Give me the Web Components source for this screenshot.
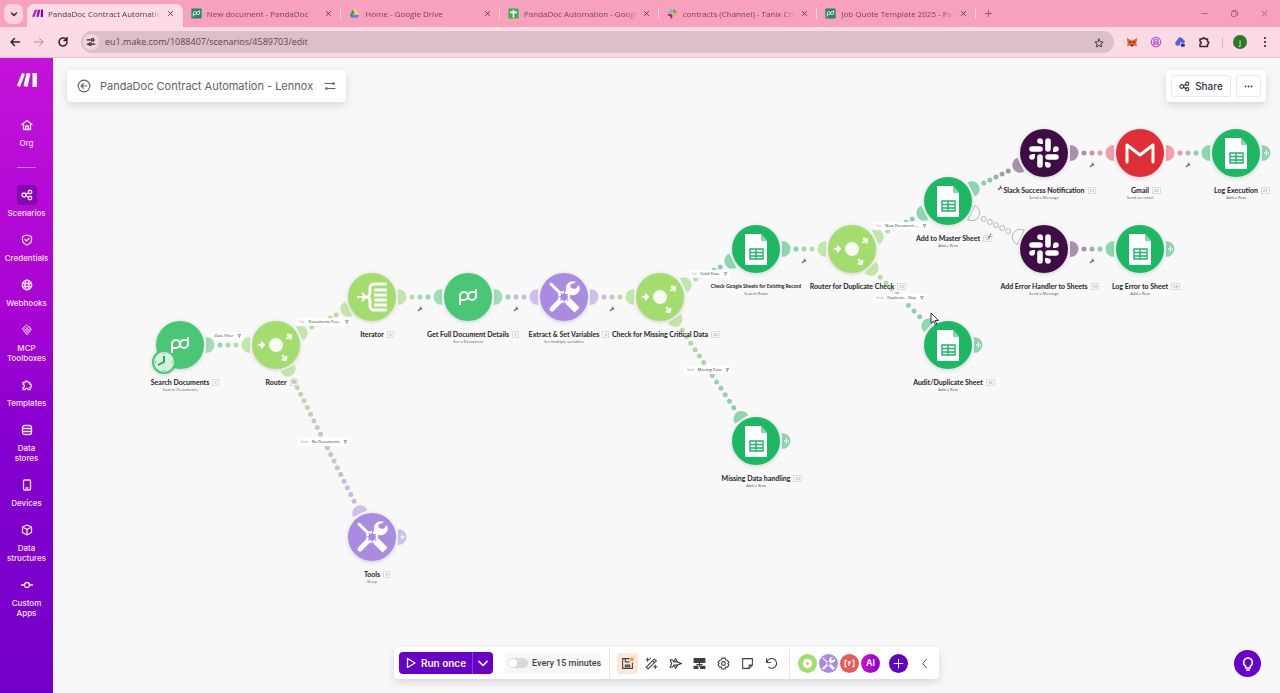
<!DOCTYPE html>
<html lang="en">
<head>
<meta charset="utf-8">
<title>PandaDoc Contract Automation - Lennox | Make</title>
<style>
html,body{margin:0;height:100%}
body{font-family:Inter,"Liberation Sans",sans-serif;color:#3c3f45;overflow:hidden}
</style>
</head>
<body>
<make-app></make-app>
<script>
const define = (name, html, setup) => {
  const tpl = document.createElement('template');
  tpl.innerHTML = '<style>*{box-sizing:border-box}button{font:inherit;color:inherit;border:0;background:none;padding:0;margin:0}svg{display:block}</style>' + html;
  customElements.define(name, class extends HTMLElement {
    constructor() {
      super();
      this.attachShadow({mode: 'open'}).append(tpl.content.cloneNode(true));
    }
    connectedCallback() { if (setup) setup.call(this, this.shadowRoot); }
  });
};

/* ---------- icons ---------- */
const ICONS = {
  down: '<path d="M7 10l5 5 5-5"/>',
  close: '<path d="M5 5l14 14M19 5L5 19"/>',
  plus: '<path d="M12 4v16M4 12h16"/>',
  min: '<path d="M4 12h16"/>',
  restore: '<rect x="4" y="7" width="12" height="13" rx="2"/><path d="M8 4h9a3 3 0 0 1 3 3v10"/>',
  back: '<path d="M21 12H4M11 5l-7 7 7 7"/>',
  fwd: '<path d="M3 12h17M13 5l7 7-7 7"/>',
  reload: '<path d="M20 12a8 8 0 1 1-2.5-5.8M20 3v6h-6"/>',
  tune: '<path d="M3 7h7M3 17h3M14 17h7"/><circle cx="16" cy="7" r="3"/><circle cx="10" cy="17" r="3"/>',
  sliders: '<path d="M2 7h17M5 17h17"/><circle cx="19" cy="7" r="2"/><circle cx="5" cy="17" r="2"/>',
  star: '<path d="M12 2.500l2.900 6.500 7.100.7-5.400 4.700 1.600 7L12 17.700l-6.200 3.700 1.600-7L2 9.700 9.100 9z"/>',
  puzzle: '<path d="M4 6h5a2.500 2.500 0 0 1 5 0h5v5a2.500 2.500 0 0 1 0 5v5H4v-5a2.500 2.500 0 0 0 0-5z"/>',
  piece: '<path d="M4 7h4a3 3 0 1 1 6 0h4v4a3 3 0 1 1 0 6v4h-4a2.500 2.500 0 1 0-5 0H4v-4a3 3 0 1 0 0-6z"/>',
  dots: '<g fill="currentColor" stroke="none"><circle cx="12" cy="4" r="2.200"/><circle cx="12" cy="12" r="2.200"/><circle cx="12" cy="20" r="2.200"/></g>',
  more: '<g fill="currentColor" stroke="none"><circle cx="4" cy="12" r="2.400"/><circle cx="12" cy="12" r="2.400"/><circle cx="20" cy="12" r="2.400"/></g>',
  share: '<circle cx="6" cy="12" r="4"/><circle cx="18" cy="6" r="3.500"/><circle cx="18" cy="18" r="3.500"/><path d="M10 10.500l5-3M10 13.500l5 3"/>',
  backc: '<circle cx="12" cy="12" r="10"/><path d="M17 12H7M11 8l-4 4 4 4"/>',
  home: '<path d="M2 11l10-8 10 8M5 9v12h14V9M9.500 21v-7h5v7"/>',
  shield: '<path d="M12 2l9 3v7c0 5-4 8-9 10-5-2-9-5-9-10V5z"/><path d="M8 11l3 3 5-5"/>',
  globe: '<circle cx="12" cy="12" r="9.500"/><ellipse cx="12" cy="12" rx="4" ry="9.500"/><path d="M3 9h18M3 15h18"/>',
  mcp: '<g stroke-width="1.700"><path d="M12 2l9 8-9 12L3 10z"/><path d="M8.500 5.500l9 9M5.500 8.500l9 9M15.500 5.500l-9 9M18.500 8.500l-9 9"/></g>',
  data: '<rect x="3" y="3" width="18" height="18" rx="4"/><path d="M3 9h18M3 15h18"/>',
  device: '<rect x="5" y="2" width="14" height="20" rx="2"/><path d="M10 18h4"/>',
  cube: '<path d="M12 2l9 4v11l-9 5-9-5V6zM3 6l9 5 9-5M12 11v11"/>',
  commit: '<circle cx="12" cy="12" r="5"/><path d="M0 12h7M17 12h7"/>',
  play: '<path d="M5 3l15 9-15 9z"/>',
  save: '<path d="M15 3H3v18h18V11M8 3v6h7M8 15h8v3H8z"/><circle cx="20" cy="4" r="3.500" fill="#f09a3e" stroke="none"/>',
  wand: '<path d="M2 19L17 4l4 3L6 22zM14 7l3 3M5 2v6M2 5h6M19 15v6M16 18h6M10 2v1"/>',
  plane: '<path d="M2 5h4l3 4h6l8 3-8 3H9l-3 4H2l3-7zM9 9l3-6 4 6M9 15l3 6 4-6"/>',
  align: '<path d="M2 3h20v7H2z" fill="currentColor"/><path d="M12 10v7M7 14h10"/><path d="M2 17h7v4H2zM14 17h8v4h-8z" fill="currentColor"/>',
  gear: '<path d="M9 2h6l1 3 3 1 3 4-2 2 2 3-3 4-3-.5-1 3.500H9l-1-3.500-3 .5-3-4 2-3-2-2 3-4 3-1z"/><circle cx="12" cy="12" r="3.500"/>',
  note: '<path d="M3 3h18v12l-6 6H3zM21 15h-6v6"/>',
  undo: '<path d="M3 3v7h7M3.500 10A9 9 0 1 1 7 19"/>',
  left: '<path d="M16 3l-8 9 8 9"/>',
  bulb: '<path d="M12 3a6.500 6.500 0 0 0-3.500 12v3h7v-3A6.500 6.500 0 0 0 12 3zM10 21h4"/>'
};
define('ui-icon', `<style>:host{display:inline-block;flex:none;width:12px;height:12px}
svg{width:100%;height:100%;fill:none;stroke:currentColor;stroke-linecap:round;stroke-linejoin:round}</style><svg viewBox="0 0 24 24" aria-hidden="true"></svg>`,
function (r) {
  const s = r.querySelector('svg');
  s.innerHTML = ICONS[this.getAttribute('name')];
  s.style.strokeWidth = this.getAttribute('weight') || '2';
});

/* ---------- brand marks ---------- */
const PD = '<g fill="none" stroke="#fff" stroke-width="2"><path d="M-8 8V-1a4 4 0 0 1 8 0 4 4 0 0 0 8 0V-8"/><path d="M-8 3h4a4 4 0 0 0 4-4 4 4 0 0 1 4-4h4"/></g>';
const MARKS = {
  make: '<path fill="url(#mk)" d="M-6-10l5 1-7 18-6-1zM1-10l6 1-4 18-6-1zM9-10h5V9H8z"/><defs><linearGradient id="mk"><stop stop-color="#d21bd3"/><stop offset="1" stop-color="#6d00cc"/></linearGradient></defs>',
  pd: '<rect x="-13" y="-13" width="26" height="26" rx="2" fill="#248567"/>' + PD,
  drive: '<path fill="#1fa463" d="M-4-10L-12 4l4 7L0-3z"/><path fill="#ffd04b" d="M-4-10h8L12 4H4z"/><path fill="#4688f4" d="M-4 4h16l-4 7H-8z"/>',
  sheets: '<rect x="-13" y="-13" width="26" height="26" rx="3" fill="#3eae4f"/><path d="M-9-3H9M0-9V10" stroke="#fff" stroke-width="4.500"/>',
  slack: '<g stroke-width="5" stroke-linecap="round"><path stroke="#5ac0e0" d="M-3-9v5M-9-3h5"/><path stroke="#4bb07f" d="M4-9v6M9-3h-1"/><path stroke="#e8b23c" d="M4 4h5"/><path stroke="#c21d55" d="M-3 4v6M-9 4h2"/></g>',
  fox: '<path fill="#e2622b" d="M-12-10L-3-4h6l9-6-2 14 2 6-7-2-2 2h-6l-2-2-7 2 2-6z"/><path fill="#3a2320" d="M-9-1h6l1 4zM9-1H3L2 3zM-3 7h6l-1 3h-4z"/>',
  ext: '<g fill="none" stroke="#b04bd0" stroke-width="2.400"><circle r="11"/><path d="M-5 7V-3a5 4 0 0 1 10 0V7M-2-3v10M2-3v10"/></g>',
  drop: '<path fill="#5062e0" d="M-12 3L-2-11l6 1 8 9-4 5-6-4-3 8-7 1z"/><path fill="#26357d" d="M2 4h9v7H2z"/>'
};
define('brand-mark', `<style>:host{display:inline-block;flex:none;width:10px;height:10px}svg{width:100%;height:100%}</style><svg viewBox="-14 -14 28 28" aria-hidden="true"></svg>`,
function (r) { r.querySelector('svg').innerHTML = MARKS[this.getAttribute('name')] || ''; });

/* ---------- browser frame ---------- */
define('browser-tab', `<style>
:host{display:flex;align-items:flex-start;min-width:0;height:23px;margin-top:4px;padding:0 7px 0 8px;position:relative;color:#7a4256}
:host([active]){background:#fcdbe5;color:#4d3640;border-radius:7px 7px 0 0;margin-left:3px;padding-left:5px}
:host(:not([active]))::after{content:"";position:absolute;right:0;top:4px;width:1px;height:11px;background:#fcd3df}
.tab{flex:1;min-width:0;display:flex;align-items:center;gap:5px;text-align:left;height:19px}
.t{flex:1;overflow:hidden;white-space:nowrap;font-size:8px;line-height:12px;-webkit-mask-image:linear-gradient(90deg,#000 90%,transparent)}
brand-mark{width:11px;height:11px}
.x{padding:6px 2px;margin-left:4px;color:#4d2f3a}ui-icon{width:7px;height:7px;display:block}
</style><button class="tab" role="tab"><brand-mark></brand-mark><span class="t"><slot></slot></span></button><button class="x" aria-label="Close tab"><ui-icon name="close" weight="3"></ui-icon></button>`,
function (r) { const m = document.createElement('brand-mark'); m.setAttribute('name', this.getAttribute('mark')); r.querySelector('brand-mark').replaceWith(m); });

define('browser-frame', `<style>
:host{display:block;font-family:"Open Sans","Noto Sans",sans-serif}
.strip{display:flex;height:27px;background:#f7a1bc;align-items:flex-start}
.search{width:19px;height:20px;margin:4px 1px 0 4px;border-radius:7px;background:#fbd3df;display:grid;place-items:center;color:#3d2730}
.tabs{display:grid;grid-template-columns:repeat(6,1fr);flex:0 1 952px;min-width:0}
.new{width:24px;height:27px;display:grid;place-items:center;color:#7a4256}
.win{margin-left:auto;display:flex;gap:21px;padding:9px 11px 0 0;color:#96566b}
.win ui-icon,.new ui-icon{width:9px;height:9px;display:block}
.bar{height:31px;background:#fcdae4;border-bottom:1px solid #eabfcd;display:flex;align-items:center;color:#33232b;padding:0 9px}
.nav{display:flex;gap:12px;width:72px}
.addr{flex:1;height:22px;border-radius:11px;background:#dcbfc9;display:flex;align-items:center;gap:6px;padding:0 10px 0 2px}
.site{width:16px;height:16px;border-radius:8px;background:#f0d5de;display:grid;place-items:center}
.addr ui-icon{width:10px;height:10px}
input{flex:1;min-width:0;border:0;background:none;font:9px/14px "Open Sans","Noto Sans",sans-serif;color:#62434f;padding:0;outline:0}
.ext{display:flex;align-items:center;margin-left:12px;gap:12px}
.ext ui-icon,.ext brand-mark{width:12px;height:12px;display:block}
.ext i{width:1px;height:11px;background:#f3a3bb}
.me{width:14px;height:14px;border-radius:7px;background:#2d7a26;color:#fff;font-size:8px;line-height:14px;text-align:center;margin-left:-2px}
</style>
<div class="strip"><button class="search" aria-label="Search tabs"><ui-icon name="down" weight="3"></ui-icon></button>
<div class="tabs" role="tablist">
<browser-tab active mark="make">PandaDoc Contract Automation</browser-tab>
<browser-tab mark="pd">New document - PandaDoc</browser-tab>
<browser-tab mark="drive">Home - Google Drive</browser-tab>
<browser-tab mark="sheets">PandaDoc Automation - Google</browser-tab>
<browser-tab mark="slack">contracts (Channel) - Tanix Com</browser-tab>
<browser-tab mark="pd">Job Quote Template 2025 - Pan</browser-tab>
</div><button class="new" aria-label="New tab"><ui-icon name="plus"></ui-icon></button>
<div class="win"><button aria-label="Minimize"><ui-icon name="min"></ui-icon></button><button aria-label="Restore"><ui-icon name="restore"></ui-icon></button><button aria-label="Close"><ui-icon name="close"></ui-icon></button></div></div>
<div class="bar"><div class="nav"><button aria-label="Back"><ui-icon name="back" weight="3"></ui-icon></button><button aria-label="Forward" style="color:#b28796"><ui-icon name="fwd"></ui-icon></button><button aria-label="Reload"><ui-icon name="reload" weight="3"></ui-icon></button></div>
<div class="addr"><span class="site"><ui-icon name="tune" weight="3"></ui-icon></span><input aria-label="Address" value="eu1.make.com/1088407/scenarios/4589703/edit"><button aria-label="Bookmark"><ui-icon name="star"></ui-icon></button></div>
<div class="ext"><brand-mark name="fox"></brand-mark><brand-mark name="ext"></brand-mark><brand-mark name="drop"></brand-mark><ui-icon name="puzzle" weight="3"></ui-icon><i></i><button class="me">j</button><button aria-label="Menu"><ui-icon name="dots"></ui-icon></button></div></div>`);

/* ---------- left navigation ---------- */
define('nav-item', `<style>
:host{display:block}
a{display:flex;flex-direction:column;align-items:center;color:#fbe3ff;text-decoration:none;font-size:8px;line-height:10px;font-weight:500;text-align:center}
.i{width:20px;height:20px;display:grid;place-items:center;border-radius:4px;margin-bottom:3px}
:host([active]) .i{background:#8309b3}
.i ui-icon{width:12px;height:12px}
</style><a href="#"><span class="i"></span><span class="t"><slot></slot></span></a>`,
function (r) { r.querySelector('.i').innerHTML = `<ui-icon name="${this.getAttribute('icon')}" weight="2.600"></ui-icon>`; });
define('side-nav', `<style>
:host{display:flex;flex-direction:column;align-items:stretch;flex:none;width:53px;background:linear-gradient(#c412d9,#a704d3 40%,#8500cf 60%,#7300c8)}
.logo{display:block;margin:15px auto 28px;width:20px}
hr{width:19px;border:0;border-top:1px solid #d66be8;margin:19px auto 17px}
nav{display:flex;flex-direction:column;gap:12px}
</style><a class="logo" href="#" aria-label="Make"><svg width="20" height="14" viewBox="0 0 20 14"><path fill="#fff" d="M5 0l3 1-5 13-3-1.500zM9.500 0l4 .5-3 13.500-4-1zM15.500 0H20v14h-4.500z"/></svg></a>
<nav-item icon="home">Org</nav-item><hr>
<nav><nav-item active icon="share">Scenarios</nav-item><nav-item icon="shield">Credentials</nav-item><nav-item icon="globe">Webhooks</nav-item><nav-item icon="mcp">MCP<br>Toolboxes</nav-item><nav-item icon="piece">Templates</nav-item><nav-item icon="data">Data<br>stores</nav-item><nav-item icon="device">Devices</nav-item><nav-item icon="cube">Data<br>structures</nav-item><nav-item icon="commit">Custom<br>Apps</nav-item></nav>`);

/* ---------- scenario modules ---------- */
const TOOLS = '<g stroke="#fff" fill="#fff"><path d="M-13-13l9 9" stroke-width="3" stroke-linecap="round"/><path d="M4 4l9 9" stroke-width="7"/><path d="M-12 12L6-6" stroke-width="5" stroke-linecap="round"/><path stroke="none" d="M12-15a7 7 0 1 0 3 3l-4 4-4-1-1-3z"/></g>';
const ARROW = 'd="M-18 0h6M-15-3l3 3-3 3"';
const APPS = {
  pd: {c: '#49c775', p: '#9fdcb8', s: PD},
  router: {c: '#a3dd6e', p: '#c3e6ab', s: `<circle r="7" fill="#f7fbf3"/><g fill="none" stroke="#fff" stroke-width="2"><path ${ARROW}/><path ${ARROW} transform="rotate(-32) translate(30 0)"/><path ${ARROW} transform="rotate(57) translate(30 0)"/></g>`},
  iterator: {c: '#a3dd6e', p: '#c3e6ab', s: '<g fill="none" stroke="#fff"><path stroke-width="3" d="M15-13H2a4 4 0 0 0-4 4v5q0 4-4 4 4 0 4 4v5a4 4 0 0 0 4 4h13"/><path stroke-width="3" d="M2-7h13M2-2h13M2 3h13M2 8h13"/><path stroke-width="2" d="M-15 0h8M-10-4l4 4-4 4"/></g>'},
  tools: {c: '#a98be2', p: '#cfc0ea', s: TOOLS + '<circle r="5" fill="#a98be2" stroke="#fff" stroke-width="2.400" stroke-dasharray="3 1"/>'},
  sheets: {c: '#1db863', p: '#8dd6ae', s: '<path fill="#fff" d="M-10-15H5l6 7v23a1 1 0 0 1-1 1h-20a1 1 0 0 1-1-1v-29a1 1 0 0 1 1-1z"/><path fill="#8bd6ab" d="M5-15l6 7H5z"/><g fill="none" stroke="#1db863" stroke-width="1.400"><path d="M-6 0H7V10H-6zM-6 3.500H7M-6 7H7M0 0v10"/></g>'},
  slack: {c: '#3f0c46', p: '#a88fac', s: '<g stroke="#fff" stroke-width="5.600" stroke-linecap="round"><path d="M-4-4h-8M-4-12h0M4-12v8M12-4h0M4 4h8M4 12h0M-4 4v8M-12 4h0"/></g><path fill="#fff" d="M-4-12h3v3h-3zM12-4v3H9v-3zM4 12H1V9h3zM-12 4V1h3v3z"/>'},
  gmail: {c: '#e02e38', p: '#f09ea8', s: '<path d="M-13 9V-8L0 2 13-8V9" fill="none" stroke="#fff" stroke-width="3" stroke-linejoin="round" stroke-linecap="round"/>'}
};
define('flow-node', `<style>
:host{position:absolute;width:0;display:flex;flex-direction:column;align-items:center;color:#222429;font-family:Lato,"Open Sans",sans-serif}
.disc{width:52px;height:52px;margin-top:-26px;border-radius:26px;background:#f8f8f8;padding:2px;flex:none}
.disc svg{border-radius:24px;overflow:visible;filter:drop-shadow(0 1px 2px #0000002a)}
.name{position:relative;white-space:nowrap;font-weight:700;font-size:7px;line-height:10px;margin-top:6px}
:host([dense]) .name{font-size:5px}
.n{position:absolute;left:100%;top:2px;margin-left:3px;border:1px solid #dcdcdc;font-weight:400;font-size:4px;line-height:5px;padding:0 1px;min-width:7px;text-align:center;color:#999}
.sub{white-space:nowrap;font:4px/5px "Open Sans",sans-serif;color:#555}
</style><div class="disc"><svg width="48" height="48" viewBox="-24 -24 48 48"></svg></div><div class="name"><span class="l"></span><span class="n"></span></div><div class="sub"></div>`,
function (r) {
  const g = n => this.getAttribute(n), app = APPS[g('app')];
  r.querySelector('svg').innerHTML = `<circle r="24" fill="${app.c}"/>${app.s}` + (this.hasAttribute('clock') ?
    '<g transform="translate(-16 17)"><circle r="12" fill="#49c775"/><circle r="10" fill="#d3f2dd"/><path d="M0-6V0l-6 3" fill="none" stroke="#249b50" stroke-width="1.800"/><path d="M0-9v1M0 8v1M-9 0h1M8 0h1" stroke="#249b50"/></g>' : '');
  r.querySelector('.l').textContent = g('name');
  r.querySelector('.sub').textContent = g('sub') || '';
  const n = r.querySelector('.n');
  if (g('n')) n.textContent = g('n'); else n.remove();
});
define('route-filter', `<style>
:host{position:absolute;transform:translate(-50%,-50%);display:flex;align-items:center;gap:4px;height:8px;padding:0 2px;background:#fff;border-radius:2px;white-space:nowrap;font:4px/8px "Open Sans",sans-serif;color:#333}
.o{color:#999}
</style><span class="o"></span><slot></slot><svg width="4" height="4" viewBox="0 0 8 8"><path d="M1 1h6L4 4v3z" fill="none" stroke="#555"/></svg>`,
function (r) { const o = r.querySelector('.o'); if (this.getAttribute('order')) o.textContent = this.getAttribute('order'); else o.remove(); });

/* Canvas coordinates of the modules, links between them and link filters. */
const NODES = {
  search: [127, 287, 'pd', 'Search Documents', 'Search Documents', '1'],
  router: [223, 287, 'router', 'Router', '', '10'],
  iter: [319, 239, 'iterator', 'Iterator', '', '4'],
  full: [415, 239, 'pd', 'Get Full Document Details', 'Get a Document', '5'],
  extract: [511, 239, 'tools', 'Extract & Set Variables', 'Set multiple variables', '6'],
  missing: [607, 239, 'router', 'Check for Missing Critical Data', '', '20'],
  check: [703, 191, 'sheets', 'Check Google Sheets for Existing Record', 'Search Rows', ''],
  dup: [799, 191, 'router', 'Router for Duplicate Check', '', '13'],
  master: [895, 143, 'sheets', 'Add to Master Sheet', 'Add a Row', '14'],
  slack: [991, 95, 'slack', 'Slack Success Notification', 'Send a Message', '15'],
  gmail: [1087, 95, 'gmail', 'Gmail', 'Send an email', '22'],
  log: [1183, 95, 'sheets', 'Log Execution', 'Add a Row', '21'],
  err: [991, 191, 'slack', 'Add Error Handler to Sheets', 'Send a Message', '19'],
  logerr: [1087, 191, 'sheets', 'Log Error to Sheet', 'Add a Row', '18'],
  audit: [895, 287, 'sheets', 'Audit/Duplicate Sheet', 'Add a Row', '16'],
  miss2: [703, 383, 'sheets', 'Missing Data handling', 'Add a Row', '12'],
  tools: [319, 479, 'tools', 'Tools', 'Sleep', '9']
};
const LINKS = [['search','router'],['router','iter'],['router','tools'],['iter','full'],['full','extract'],['extract','missing'],['missing','check'],['missing','miss2'],['check','dup'],['dup','master'],['dup','audit'],['master','slack'],['master','err',1],['slack','gmail'],['gmail','log'],['err','logerr']];
const FILTERS = [[175,278,'','Date Filter'],[271,264,'1st','Documents Fou...'],[271,384,'2nd','No Documents'],[656,216,'1st','Valid Data'],[655,312,'2nd','Missing Data'],[848,168,'1st','New Document ...'],[847,240,'2nd','Duplicate - Skip']];
const WRENCHES = [[367,251],[463,251],[559,251],[751,203],[947,130],[937,178],[1039,107],[1135,107],[1039,203]];
const mix = (a, b, t) => '#' + [1, 3, 5].map(i => Math.round(parseInt(a.substr(i, 2), 16) * (1 - t) + parseInt(b.substr(i, 2), 16) * t).toString(16).padStart(2, '0')).join('');

define('flow-canvas', `<style>:host{position:absolute;inset:0;display:block;overflow:hidden}svg{position:absolute;inset:0;width:100%;height:100%}</style><svg></svg><div class="layer"></div>`,
function (r) {
  let out = '';
  const port = (x, y, a, c, open) => `<path transform="translate(${x} ${y}) rotate(${a})" d="M26-8a8.500 8 0 0 1 0 16z" ${open ? 'fill="none" stroke="#aaa" stroke-width=".8"' : `fill="${c}"`}/>`;
  for (const [f, t, open] of LINKS) {
    const [x1, y1, a1] = NODES[f], [x2, y2, a2] = NODES[t];
    const D = Math.hypot(x2 - x1, y2 - y1), ang = Math.atan2(y2 - y1, x2 - x1) * 180 / Math.PI;
    const c1 = APPS[a1].p, c2 = APPS[a2].p, steps = Math.round((D - 80) / 7.5);
    out += port(x1, y1, ang, c1, open) + port(x2, y2, ang + 180, c2, open);
    for (let i = 0; i <= steps; i++) {
      const k = i / steps, d = (40 + (D - 80) * k) / D;
      out += `<circle cx="${x1 + (x2 - x1) * d}" cy="${y1 + (y2 - y1) * d}" r="2.500" ${open ? 'fill="none" stroke="#aaa" stroke-width=".8"' : `fill="${mix(mix(c1, c2, k), '#999999', .16)}"`}/>`;
    }
  }
  for (const id of ['log', 'logerr', 'audit', 'miss2', 'tools']) {
    const [x, y, a] = NODES[id];
    out += port(x, y, 0, APPS[a].p) + `<path d="M${x + 28} ${y}h5M${x + 30.5} ${y - 2.5}v5" stroke="#fff"/>`;
  }
  for (const [x, y] of WRENCHES) out += `<path d="M${x - 2} ${y + 2}l3-3" stroke="#666" stroke-width="1.200"/><path d="M${x + 1.5} ${y - 2.5}a1.600 1.600 0 1 0 1.200 2.500l-1.600-.8z" fill="#666"/>`;
  r.querySelector('svg').innerHTML = out;
  const layer = r.querySelector('.layer');
  const add = (tag, x, y, attrs) => {
    const e = document.createElement(tag);
    for (const k in attrs) e.setAttribute(k, attrs[k]);
    e.style.left = x + 'px'; e.style.top = y + 'px';
    layer.append(e);
    return e;
  };
  for (const id in NODES) {
    const [x, y, app, name, sub, n] = NODES[id], at = {app, name, sub, n};
    if (id === 'search') at.clock = '';
    if (id === 'check') at.dense = '';
    add('flow-node', x, y, at);
  }
  for (const [x, y, order, text] of FILTERS) add('route-filter', x, y, {order}).textContent = text;
});

/* ---------- floating panels ---------- */
const PANEL = 'background:#fff;border-radius:4px;box-shadow:0 3px 8px #00000024;display:flex;align-items:center;height:32px;';
define('scenario-title', `<style>:host{${PANEL}padding:0 10px;gap:9px}h1{margin:0;font-size:11px;line-height:16px;font-weight:400;color:#5d6168;white-space:nowrap}
button{color:#5d6168}ui-icon{display:block;width:14px;height:14px}.s{margin-left:2px}.s ui-icon{width:12px;height:12px}</style>
<button aria-label="Back"><ui-icon name="backc"></ui-icon></button><h1><slot></slot></h1><button class="s" aria-label="Scenario settings"><ui-icon name="sliders"></ui-icon></button>`);
define('share-panel', `<style>:host{${PANEL}padding:0 5px;gap:5px}button{height:22px;border:1px solid #e8e8ea;border-radius:3px;display:flex;align-items:center;justify-content:center;gap:5px;font-size:10px;line-height:14px;font-weight:500;width:60px;color:#33363c}.m{width:25px}ui-icon{width:11px;height:11px}.m ui-icon{width:9px;height:9px}</style>
<button><ui-icon name="share" weight="2.400"></ui-icon>Share</button><button class="m" aria-label="More"><ui-icon name="more"></ui-icon></button>`);
define('run-toolbar', `<style>
:host{${PANEL}padding:0 9px 0 5px;white-space:nowrap;font-size:9px;line-height:12px}
.run{display:flex;height:22px;border-radius:4px;overflow:hidden;background:#6900c8;color:#fff;font-size:10px;font-weight:600}
.run button{display:flex;align-items:center;justify-content:center;gap:4px;width:73px}.run .d{width:21px;border-left:1px solid #8d3bd6}
.sched{display:flex;align-items:center;gap:4px;height:22px;width:95px;margin:0 9px 0 12px;padding:0 3px;background:#f7f7f7;border-radius:3px;font-family:Roboto,sans-serif;font-weight:500;color:#3f4248}
input{appearance:none;margin:0;width:20px;height:10px;border-radius:5px;background:#d9d9d9;display:block;flex:none}
input::before{content:"";display:block;width:8px;height:8px;margin:1px;border-radius:4px;background:#fff}
.tools{display:flex;gap:3px;border:solid #e6e6e8;border-width:0 1px;height:32px;align-items:center;padding:0 7px;color:#3c3f45}
.tools button{width:21px;height:21px;display:grid;place-items:center;border-radius:3px}.tools .on{background:#fce7d9}
.tools ui-icon{width:13px;height:13px}
.apps{display:flex;gap:2px;padding-left:8px;align-items:center}
.apps button{width:19px;height:19px;border-radius:10px;color:#fff;font-weight:600;display:grid;place-items:center}
.apps svg{width:15px;height:15px}.apps .add{margin-left:7px;background:#5f00c4}.apps .add ui-icon{width:13px;height:13px}
.col{margin-left:11px;display:grid}.col ui-icon{width:11px;height:11px}
</style>
<div class="run"><button><ui-icon name="play" weight="2.600"></ui-icon>Run once</button><button class="d" aria-label="Run options"><ui-icon name="down" weight="2" style="width:20px;height:20px"></ui-icon></button></div>
<label class="sched"><input type="checkbox" role="switch">Every 15 minutes</label>
<div class="tools"></div>
<div class="apps"><button style="background:#a3dd6e" aria-label="Flow control"><svg viewBox="-12 -12 24 24"><circle r="5" fill="none" stroke="#fff" stroke-width="5"/></svg></button><button style="background:#a98be2" aria-label="Tools"><svg viewBox="-18 -18 36 36">${APPS.tools.s}</svg></button><button style="background:#e95a56" aria-label="Text parser"><svg viewBox="-12 -12 24 24" fill="none" stroke="#fff" stroke-width="2"><path d="M-4-5h-3V5h3M4-5h3V5H4M-1-4V4M-3-3h4v3"/></svg></button><button style="background:linear-gradient(90deg,#cb12cf,#8a00cc)">AI</button><button class="add" aria-label="Add module"><ui-icon name="plus"></ui-icon></button></div><button class="col" aria-label="Collapse"><ui-icon name="left"></ui-icon></button>`,
function (r) {
  r.querySelector('.tools').innerHTML = [['save','Save'],['wand','Auto-align'],['plane','Explain flow'],['align','Align'],['gear','Settings'],['note','Notes'],['undo','Undo']].map(([n, l], i) => `<button aria-label="${l}"${i ? '' : ' class="on"'}><ui-icon name="${n}"></ui-icon></button>`).join('');
});

define('make-app', `<style>
:host{display:flex;flex-direction:column;height:100vh}
.body{flex:1;display:flex;min-height:0}
main{flex:1;position:relative;background:#f8f8f8;overflow:hidden}
.top{position:relative;display:flex;justify-content:space-between;padding:12px 14px 0 14px}
.bottom{position:absolute;bottom:14px;left:0;right:0;display:flex;justify-content:center;pointer-events:none}
.help{position:absolute;right:19px;bottom:16px;width:27px;height:27px;border-radius:14px;background:#6600cc;color:#fff;display:grid;place-items:center}
.help ui-icon{width:16px;height:16px}
.cursor{position:absolute;left:877px;top:254px}
</style><browser-frame></browser-frame><div class="body"><side-nav></side-nav><main><flow-canvas></flow-canvas>
<div class="top"><scenario-title>PandaDoc Contract Automation - Lennox</scenario-title><share-panel></share-panel></div>
<div class="bottom"><run-toolbar></run-toolbar></div><button class="help" aria-label="Help"><ui-icon name="bulb" weight="2.400"></ui-icon></button>
<svg class="cursor" width="10" height="14" viewBox="0 0 10 14" aria-hidden="true"><path d="M1 1v10l2.500-2 2 4 1.500-1-2-3.500h3.500z" fill="#fff" stroke="#333"/></svg></main></div>`);
</script>
</body>
</html>
